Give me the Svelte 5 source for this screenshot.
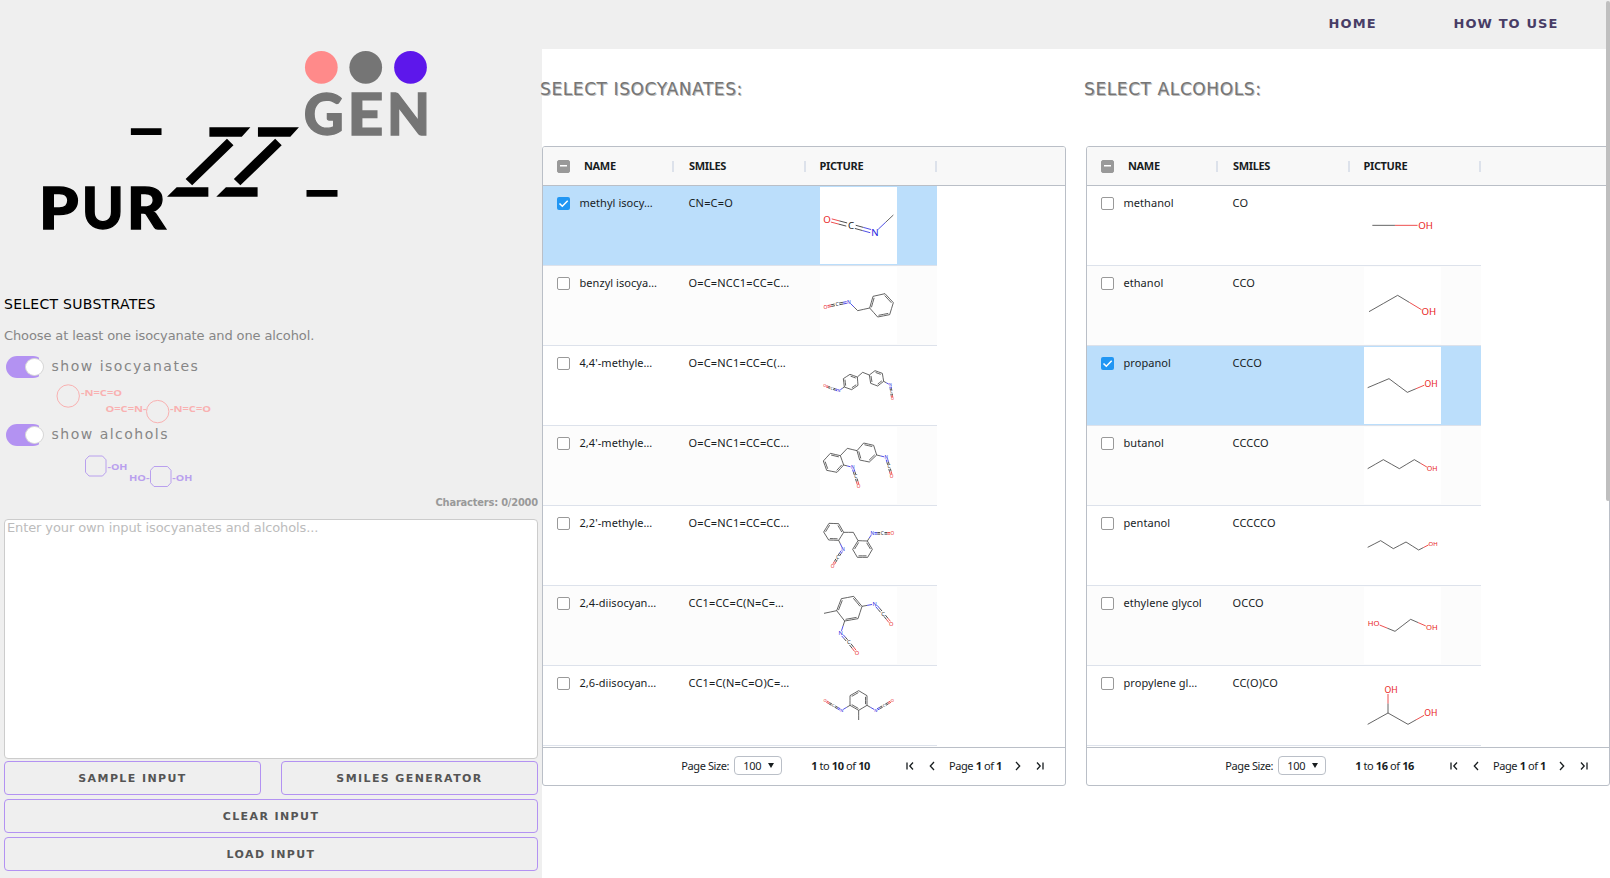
<script>
  const COLORS = { c: '#3d3d3d', C: '#222', N: '#2222e0', O: '#e82222', OH: '#e82222', HO: '#e82222' };

  // Benzene rings are written as six atom indexes; alternate edges carry the inner line.
  const ring = (s, flip = 0) =>
    [0, 1, 2, 3, 4, 5].map((k) => [s + k, s + ((k + 1) % 6), k % 2 === flip ? 3 : 1, s]);

  const isocyanates = [
    { name: 'methyl isocy…', smiles: 'CN=C=O', on: true, box: [60, 21], fs: 29,
      atoms: [[81, 118, 'O'], [153, 137, 'C'], [225, 157, 'N'], [280, 105, 'c']],
      bonds: [[0, 1, 2], [1, 2, 2], [2, 3, 1]] },
    { name: 'benzyl isocya…', smiles: 'O=C=NCC1=CC=C…', box: [60, 261], fs: 15,
      atoms: [[209, 384, 'c'], [219, 349, 'c'], [255, 341, 'c'], [280, 368, 'c'], [269, 404, 'c'], [233, 411, 'c'],
        [173, 392, 'c'], [147, 366, 'N'], [111, 373, 'C'], [76, 381, 'O']],
      bonds: [...ring(0), [0, 6, 1], [6, 7, 1], [7, 8, 2], [8, 9, 2]] },
    { name: "4,4'-methyle…", smiles: 'O=C=NC1=CC=C(…', box: [60, 501], fs: 11,
      atoms: [[133, 621, 'c'], [130, 596, 'c'], [150, 583, 'c'], [172, 591, 'c'], [174, 616, 'c'], [155, 629, 'c'],
        [208, 585, 'c'], [225, 572, 'c'], [247, 580, 'c'], [251, 604, 'c'], [233, 618, 'c'], [212, 610, 'c'],
        [188, 577, 'c'], [117, 632, 'N'], [95, 625, 'C'], [74, 617, 'O'], [271, 615, 'N'], [274, 636, 'C'], [277, 657, 'O']],
      bonds: [...ring(0), ...ring(6, 1), [3, 12, 1], [12, 6, 1], [0, 13, 1], [13, 14, 2], [14, 15, 2], [9, 16, 1], [16, 17, 2], [17, 18, 2]] },
    { name: "2,4'-methyle…", smiles: 'O=C=NC1=CC=CC…', box: [60, 21], fs: 14,
      atoms: [[70, 123, 'c'], [91, 100, 'c'], [121, 107, 'c'], [131, 135, 'c'], [111, 157, 'c'], [80, 151, 'c'],
        [171, 92, 'c'], [191, 69, 'c'], [221, 76, 'c'], [230, 105, 'c'], [208, 126, 'c'], [179, 120, 'c'],
        [142, 85, 'c'], [158, 142, 'N'], [167, 170, 'C'], [176, 199, 'O'], [259, 112, 'N'], [267, 140, 'C'], [275, 169, 'O']],
      bonds: [...ring(0, 1), ...ring(6, 1), [2, 12, 1], [12, 6, 1], [3, 13, 1], [13, 14, 2], [14, 15, 2], [9, 16, 1], [16, 17, 2], [17, 18, 2]] },
    { name: "2,2'-methyle…", smiles: 'O=C=NC1=CC=CC…', box: [60, 261], fs: 14,
      atoms: [[71, 336, 'c'], [87, 310, 'c'], [116, 311, 'c'], [131, 337, 'c'], [116, 361, 'c'], [86, 360, 'c'],
        [174, 362, 'c'], [158, 388, 'c'], [172, 412, 'c'], [203, 412, 'c'], [217, 388, 'c'], [202, 363, 'c'],
        [160, 337, 'c'], [129, 388, 'N'], [113, 412, 'C'], [98, 438, 'O'], [217, 340, 'N'], [247, 340, 'C'], [277, 340, 'O']],
      bonds: [...ring(0), ...ring(6), [3, 12, 1], [12, 6, 1], [4, 13, 1], [13, 14, 2], [14, 15, 2], [11, 16, 1], [16, 17, 2], [17, 18, 2]] },
    { name: '2,4-diisocyan…', smiles: 'CC1=CC=C(N=C=…', box: [60, 501], fs: 17,
      atoms: [[110, 572, 'c'], [124, 536, 'c'], [161, 529, 'c'], [186, 559, 'c'], [174, 596, 'c'], [134, 603, 'c'],
        [72, 580, 'c'], [224, 552, 'N'], [249, 581, 'C'], [274, 612, 'O'], [122, 640, 'N'], [146, 667, 'C'], [171, 699, 'O']],
      bonds: [...ring(0), [0, 6, 1], [3, 7, 1], [7, 8, 2], [8, 9, 2], [5, 10, 1], [10, 11, 2], [11, 12, 2]] },
    { name: '2,6-diisocyan…', smiles: 'CC1=C(N=C=O)C=…', box: [60, 741], fs: 12,
      atoms: [[176, 812, 'c'], [201, 827, 'c'], [201, 856, 'c'], [176, 871, 'c'], [150, 856, 'c'], [150, 827, 'c'],
        [176, 900, 'c'], [227, 871, 'N'], [252, 857, 'C'], [277, 842, 'O'], [125, 871, 'N'], [100, 857, 'C'], [75, 842, 'O']],
      bonds: [...ring(0, 1), [3, 6, 1], [2, 7, 1], [7, 8, 2], [8, 9, 2], [4, 10, 1], [10, 11, 2], [11, 12, 2]] }
  ];

  const chain = (n) => Array.from({ length: n - 1 }, (_, i) => [i, i + 1, 1]);

  const alcohols = [
    { name: 'methanol', smiles: 'CO', box: [72, 21], fs: 29, atoms: [[97, 136, 'c'], [246, 136, 'OH']], bonds: chain(2) },
    { name: 'ethanol', smiles: 'CCO', box: [72, 261], fs: 29, atoms: [[87, 395, 'c'], [173, 346, 'c'], [256, 396, 'OH']], bonds: chain(3) },
    { name: 'propanol', smiles: 'CCCO', on: true, box: [72, 501], fs: 26,
      atoms: [[83, 623, 'c'], [147, 596, 'c'], [202, 637, 'c'], [264, 611, 'OH']], bonds: chain(4) },
    { name: 'butanol', smiles: 'CCCCO', box: [72, -69], fs: 21,
      atoms: [[83, 56, 'c'], [130, 29, 'c'], [178, 56, 'c'], [223, 29, 'c'], [269, 56, 'OH']], bonds: chain(5) },
    { name: 'pentanol', smiles: 'CCCCCO', box: [72, 171], fs: 18,
      atoms: [[83, 292, 'c'], [122, 272, 'c'], [160, 296, 'c'], [198, 276, 'c'], [236, 300, 'c'], [273, 281, 'OH']], bonds: chain(6) },
    { name: 'ethylene glycol', smiles: 'OCCO', box: [72, 411], fs: 23,
      atoms: [[109, 521, 'HO'], [165, 544, 'c'], [212, 508, 'c'], [267, 532, 'OH']], bonds: chain(4) },
    { name: 'propylene gl…', smiles: 'CC(O)CO', box: [72, 651], fs: 26,
      atoms: [[83, 823, 'c'], [144, 789, 'c'], [204, 823, 'c'], [263, 790, 'OH'], [144, 720, 'OH']], bonds: [...chain(4), [1, 4, 1]] }
  ];

  function lines(m) {
    const out = [];
    for (const [i, j, order, start] of m.bonds) {
      const [ax, ay, ae] = m.atoms[i];
      const [bx, by, be] = m.atoms[j];
      const len = Math.hypot(bx - ax, by - ay);
      const ux = (bx - ax) / len, uy = (by - ay) / len;
      const ta = ae === 'c' ? 0 : m.fs * 0.46, tb = be === 'c' ? 0 : m.fs * 0.46;
      const push = (off, trim = 0) => {
        const ox = -uy * off, oy = ux * off;
        const x1 = ax + ux * (ta + trim) + ox, y1 = ay + uy * (ta + trim) + oy;
        const x2 = bx - ux * (tb + trim) + ox, y2 = by - uy * (tb + trim) + oy;
        const mx = (x1 + x2) / 2, my = (y1 + y2) / 2;
        out.push([x1, y1, mx, my, COLORS[ae]], [mx, my, x2, y2, COLORS[be]]);
      };
      if (order === 2) {
        const d = Math.max(2, m.fs * 0.17);
        push(d);
        push(-d);
      } else {
        push(0);
        if (order === 3) {
          const pts = m.atoms.slice(start, start + 6);
          const cx = pts.reduce((s, p) => s + p[0], 0) / 6, cy = pts.reduce((s, p) => s + p[1], 0) / 6;
          const side = Math.sign(-uy * (cx - ax) + ux * (cy - ay));
          push(side * 4.5, 3.5);
        }
      }
    }
    return out;
  }

  const grids = [
    { title: 'SELECT ISOCYANATES:', total: 10, rows: isocyanates },
    { title: 'SELECT ALCOHOLS:', total: 16, rows: alcohols }
  ];
</script>

<div class="page">
  <nav><a href="#home">HOME</a><a href="#how">HOW TO USE</a></nav>
  <aside>
    <svg class="logo" width="540" height="230" viewBox="0 0 1568 690" preserveAspectRatio="none">
      <ellipse cx="933" cy="112" rx="47.5" ry="49" fill="#ff8a8a" />
      <ellipse cx="1062" cy="112" rx="47.5" ry="49" fill="#757575" />
      <ellipse cx="1192" cy="112" rx="47.5" ry="49" fill="#5d17eb" />
      <g class="mark" fill="#757575" stroke="#757575">
        <text x="882" y="316" textLength="116" lengthAdjust="spacingAndGlyphs">G</text>
        <text x="1009" y="316" textLength="104" lengthAdjust="spacingAndGlyphs">E</text>
        <text x="1124" y="316" textLength="125" lengthAdjust="spacingAndGlyphs">N</text>
      </g>
      <g class="mark" stroke="#000">
        <text x="113" y="596" textLength="115" lengthAdjust="spacingAndGlyphs">P</text>
        <text x="238" y="596" textLength="121" lengthAdjust="spacingAndGlyphs">U</text>
        <text x="369" y="596" textLength="112" lengthAdjust="spacingAndGlyphs">R</text>
      </g>
      <path d="M380 295H469V315H380ZM890 480H980V500H890ZM608 292H727L702 320H608ZM749 292H868L843 320H749ZM659 326L678 346L558 466L539 447ZM799 326L818 346L698 466L679 447ZM513 472H605V500H485ZM656 472H748V500H628Z" />
    </svg>
    <h3>SELECT SUBSTRATES</h3>
    <p>Choose at least one isocyanate and one alcohol.</p>
    <label><i class="toggle"><b></b></i>show isocyanates</label>
    <svg class="diagram" width="538" height="46">
      <g fill="none" stroke="#f9b1b1"><circle cx="68.2" cy="18" r="11.2" /><circle cx="157.7" cy="33.6" r="11.2" /></g>
      <g fill="#f9b1b1">
        <text x="81" y="18.4" textLength="41" lengthAdjust="spacingAndGlyphs">-N=C=O</text>
        <text x="105.5" y="34.2" textLength="41" lengthAdjust="spacingAndGlyphs">O=C=N-</text>
        <text x="170" y="34.2" textLength="41" lengthAdjust="spacingAndGlyphs">-N=C=O</text>
      </g>
    </svg>
    <label><i class="toggle"><b></b></i>show alcohols</label>
    <svg class="diagram" width="538" height="46">
      <path fill="none" stroke="#b9a0ee" d="M89 10H102.500L106 13.800V26.200L102.500 30H89L85.500 26.200V13.800ZM154 20.500H167.500L171 24.300V36.700L167.500 40.500H154L150.500 36.700V24.300Z" />
      <g fill="#b9a0ee">
        <text x="107.500" y="24" textLength="20" lengthAdjust="spacingAndGlyphs">-OH</text>
        <text x="129" y="34.500" textLength="20.500" lengthAdjust="spacingAndGlyphs">HO-</text>
        <text x="172.300" y="34.500" textLength="20" lengthAdjust="spacingAndGlyphs">-OH</text>
      </g>
    </svg>
    <div class="count">Characters: 0/2000</div>
    <textarea placeholder="Enter your own input isocyanates and alcohols..."></textarea>
    <div class="buttons">
      <button>SAMPLE INPUT</button><button>SMILES GENERATOR</button>
      <button class="wide">CLEAR INPUT</button>
      <button class="wide">LOAD INPUT</button>
    </div>
  </aside>
  <main>
    {#each grids as g}
      <section>
        <h2>{g.title}</h2>
        <div class="grid">
          <div class="head">
            <i class="box mixed"></i>
            <span class="h-name">NAME</span><span class="h-col first">SMILES</span><span class="h-col">PICTURE</span>
          </div>
          <div class="body">
            {#each g.rows as m}
              <div class="row" class:on={m.on}>
                <i class="box" class:checked={m.on}>
                  {#if m.on}<svg width="13" height="13"><path d="M2.500 6.500L5.300 9.300L10.700 3.700" fill="none" stroke="#fff" stroke-width="1.500" /></svg>{/if}
                </i>
                <span class="name">{m.name}</span>
                <span class="smiles">{m.smiles}</span>
                <svg class="pic" width="77" height="77" viewBox="{m.box[0]} {m.box[1]} 231 231">
                  {#each lines(m) as [x1, y1, x2, y2, color]}
                    <line {x1} {y1} {x2} {y2} stroke={color} stroke-width="2.400" />
                  {/each}
                  {#each m.atoms as [x, y, el]}
                    {#if el !== 'c'}
                      <text
                        x={el === 'OH' ? x - m.fs * 0.4 : el === 'HO' ? x + m.fs * 0.4 : x}
                        y={y + m.fs * 0.36}
                        font-size={m.fs}
                        fill={COLORS[el]}
                        text-anchor={el === 'OH' ? 'start' : el === 'HO' ? 'end' : 'middle'}>{el}</text>
                    {/if}
                  {/each}
                </svg>
              </div>
            {/each}
          </div>
          <div class="foot">
            <span class="ps">Page Size:</span>
            <span class="select">100<i></i></span>
            <span class="sum"><b>1</b> to <b>{g.total}</b> of <b>{g.total}</b></span>
            <svg class="i1" width="8" height="10"><path d="M1 1.500V8.500M7 1.500L3.800 5L7 8.500" /></svg>
            <svg class="i2" width="6" height="10"><path d="M5 1L1.300 5L5 9" /></svg>
            <span class="pg">Page <b>1</b> of <b>1</b></span>
            <svg class="i3" width="6" height="10"><path d="M1 1L4.700 5L1 9" /></svg>
            <svg class="i4" width="8" height="10"><path d="M1 1.500L4.200 5L1 8.500M7 1.500V8.500" /></svg>
          </div>
        </div>
      </section>
    {/each}
  </main>
  <div class="thumb"></div>
</div>

<style>
  :global(body) { margin: 0; overflow: hidden; background: #fff; }
  .page {
    width: 1610px; height: 878px; position: relative; overflow: hidden;
    display: grid; grid-template: 49px 829px / 542px 1068px;
    font-family: 'DejaVu Sans', sans-serif; box-sizing: border-box;
  }
  .page *, .page { box-sizing: border-box; }
  nav {
    grid-area: 1 / 1 / 2 / 3; background: #efefef; display: flex; justify-content: flex-end;
    padding: 15px 51.500px 0 0; gap: 76.800px;
  }
  nav a { font-weight: bold; font-size: 13px; line-height: 17px; letter-spacing: 1.1px; color: #483d66; text-decoration: none; }
  aside {
    grid-area: 1 / 1 / 3 / 2; background: #efefef; padding: 30px 4px 0; display: flex; flex-direction: column;
  }
  .logo { margin-left: -4px; flex: none; }
  .mark text { font: 900 171px Lato, sans-serif; stroke-width: 4px; }
  h3 { margin: 34px 0 0; font-size: 14px; font-weight: 400; line-height: 20px; letter-spacing: 0.28px; }
  p { margin: 12px 0 0; font-size: 13px; line-height: 20px; letter-spacing: -0.11px; color: #868686; }
  label {
    display: flex; height: 22px; margin-top: 10px; line-height: 20px; font-size: 14px;
    letter-spacing: 1.5px; color: #868686; padding-left: 2px;
  }
  .toggle { width: 38px; height: 22px; margin-right: 7.500px; border-radius: 11px; background: linear-gradient(90deg, #b392f2 33px, transparent 33px); padding: 2px 0 0 19px; }
  .toggle b { display: block; width: 19px; height: 18px; border-radius: 50%; background: #fff; border: 1px solid #d6d6d6; }
  .diagram { margin-left: -4px; flex: none; }
  .diagram text { font: bold 8.500px 'Open Sans', sans-serif; }
  .diagram + label { margin-top: 0; }
  .count { text-align: right; margin-top: 4px; font: bold 11px/14px 'DejaVu Sans Condensed', 'DejaVu Sans', sans-serif; font-stretch: condensed; color: #999; letter-spacing: -0.2px; }
  textarea {
    display: block; resize: none; width: 534px; height: 240px; margin: 9px 0 0; padding: 0 2px;
    border: 1px solid #ccc; border-radius: 4px; font: 13px/15px 'DejaVu Sans', sans-serif; letter-spacing: -0.11px; background: #fff; flex: none;
  }
  textarea::placeholder { color: #bcbcbc; }
  .buttons { display: grid; grid-template-columns: 257px 257px; gap: 4px 20px; margin-top: 2px; }
  button {
    height: 34px; border: 1px solid #b392f2; border-radius: 4px; background: #efefef; padding: 0;
    font: bold 11px 'DejaVu Sans', sans-serif; letter-spacing: 1.4px; color: #555;
  }
  .wide { grid-column: span 2; }
  main { grid-area: 2 / 2; display: flex; gap: 20px; }
  section { width: 524px; flex: none; }
  h2 {
    margin: 30px 0 0 -2px; font-size: 17px; line-height: 20px; height: 67px; font-weight: 400;
    letter-spacing: 0.6px; color: #757575; text-shadow: 1px 1px 0 #bbb;
  }
  .grid { height: 640px; border: 1px solid #babfc7; border-radius: 3px; font: 12px 'Noto Sans', sans-serif; color: #181d1f; overflow: hidden; }
  .head { height: 39px; background: #f8f8f8; border-bottom: 1px solid #babfc7; display: flex; align-items: center; padding-left: 14px; font-weight: bold; font-size: 11px; letter-spacing: -0.35px; }
  .h-name { width: 104px; padding-left: 14px; box-sizing: border-box; }
  .h-name, .h-col { height: 11px; line-height: 9px; border-right: 2px solid #dde2eb; }
  .h-col { width: 131.500px; padding-left: 14px; }
  .h-col.first { padding-left: 15px; }
  .box { width: 13px; height: 13px; flex: none; border: 1.500px solid #999; border-radius: 2px; background: #fff; display: block; }
  .mixed { background: linear-gradient(#fff, #fff) center / 7px 1.500px no-repeat #999; }
  .checked { border: 0; background: #2196f3; }
  .checked svg { display: block; }
  .body { height: 561px; overflow: hidden; }
  .row { width: 394px; height: 80px; border-bottom: 1px solid #dde2eb; display: flex; padding-left: 14px; }
  .row:nth-child(even) { background: #fcfcfc; }
  .row.on { background: #bbdefb; }
  .row .box { margin-top: 11px; }
  .row span { line-height: 18px; padding-top: 8px; font-size: 11px; white-space: nowrap; }
  .name { width: 109.500px; padding-left: 9.500px; letter-spacing: 0.05px; }
  .smiles { width: 140.500px; padding-left: 9px; letter-spacing: 0.17px; }
  .pic { width: 77px; height: 77px; background: #fff; margin-top: 1px; flex: none; }
  .pic text { font-family: 'Noto Sans', sans-serif; }
  .foot { height: 38px; border-top: 1px solid #babfc7; display: flex; align-items: center; justify-content: flex-end; font-size: 11px; padding: 0 21px 2px 0; letter-spacing: -0.4px; white-space: nowrap; }
  .foot svg { fill: none; stroke: #181d1f; stroke-width: 1.300; }
  .select { width: 48px; height: 19px; margin: 0 29px 0 5px; border: 1px solid #babfc7; border-radius: 4px; display: flex; align-items: center; padding-left: 8px; letter-spacing: -0.2px; }
  .select i { border: 3.500px solid transparent; border-top: 5px solid #181d1f; border-bottom: 0; margin-left: 7px; }
  .i1 { margin-left: 36px; }
  .i2 { margin-left: 15px; }
  .pg { margin: 0 13px 0 14px; }
  .i4 { margin-left: 15px; }
  .thumb { position: absolute; left: 1606px; top: 1px; width: 4px; height: 500px; background: #bfbfbf; border-radius: 2px; }
</style>
